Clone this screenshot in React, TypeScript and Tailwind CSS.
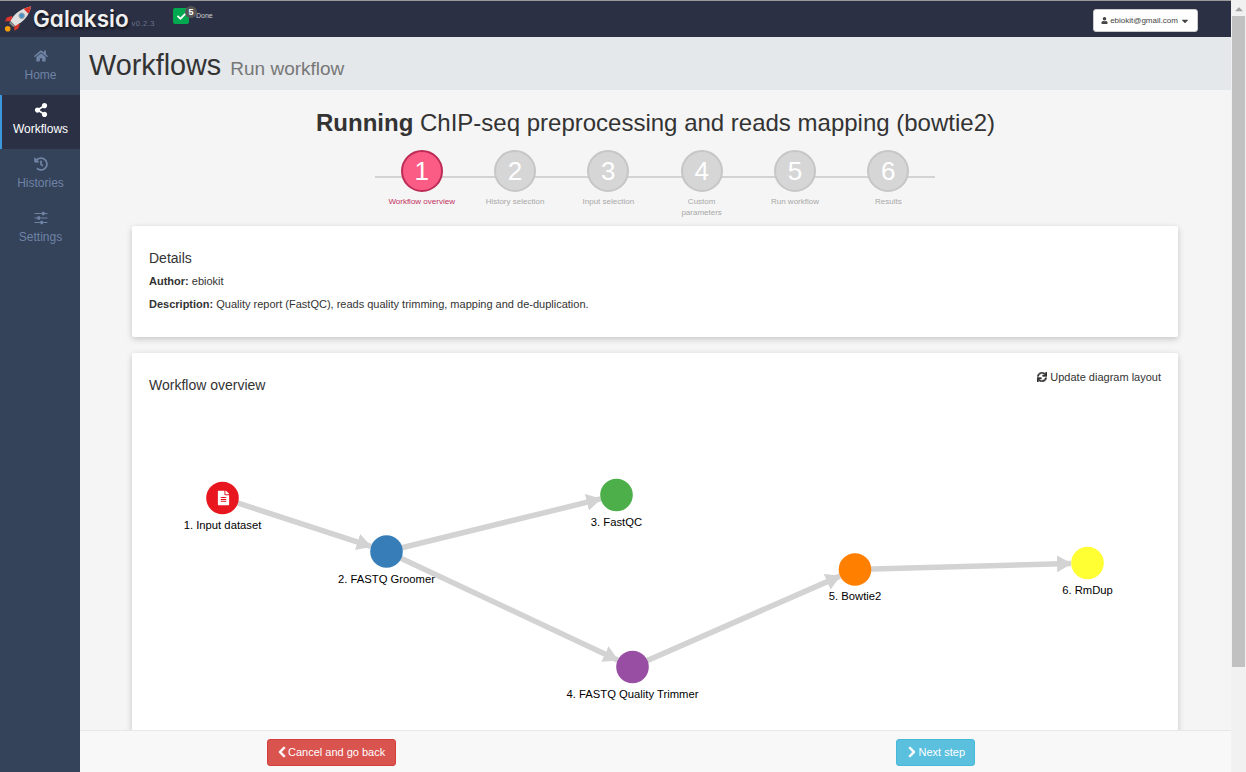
import { FaCheck, FaChevronLeft, FaChevronRight, FaCaretDown, FaCaretUp, FaFileAlt, FaHistory, FaHome, FaShareAlt, FaSync, FaUser } from 'react-icons/fa';

function SlidersIcon({ size = 14 }: { size?: number }) {
  return (
    <svg width={size} height={size} viewBox="0 0 14 14" fill="currentColor">
      <rect x="0.5" y="2" width="13" height="1" />
      <rect x="0.5" y="6.5" width="13" height="1" />
      <rect x="0.5" y="11" width="13" height="1" />
      <rect x="8" y="0.8" width="2.5" height="3.4" rx="0.5" />
      <rect x="3.5" y="5.3" width="2.5" height="3.4" rx="0.5" />
      <rect x="6.5" y="9.8" width="2.5" height="3.4" rx="0.5" />
    </svg>
  );
}

const navItems = [
  { label: 'Home', Icon: FaHome },
  { label: 'Workflows', Icon: FaShareAlt, active: true },
  { label: 'Histories', Icon: FaHistory },
  { label: 'Settings', Icon: SlidersIcon },
];

const steps = ['Workflow overview', 'History selection', 'Input selection', 'Custom parameters', 'Run workflow', 'Results'];

const nodes = [
  { x: 90.5, y: 105, color: '#e8171f', label: '1. Input dataset', ly: 136 },
  { x: 254.5, y: 158.5, color: '#377eb8', label: '2. FASTQ Groomer', ly: 190 },
  { x: 484.5, y: 102, color: '#4daf4a', label: '3. FastQC', ly: 133 },
  { x: 500.5, y: 274, color: '#984ea3', label: '4. FASTQ Quality Trimmer', ly: 305 },
  { x: 723, y: 176.5, color: '#ff7f00', label: '5. Bowtie2', ly: 207 },
  { x: 955.5, y: 170, color: '#ffff33', label: '6. RmDup', ly: 201 },
];

const edges = [
  [0, 1],
  [1, 2],
  [1, 3],
  [3, 4],
  [4, 5],
];

function RocketLogo() {
  return (
    <svg width="28" height="27" viewBox="0 0 30 28" className="-mt-[1px] shrink-0">
      <circle cx="4" cy="25" r="3" fill="#f59e0b" />
      <path d="M9 11 L3 13 L1 17 L8 17 Z" fill="#d9352b" />
      <path d="M17 20 L15 25 L11 27 L11 20 Z" fill="#d9352b" />
      <path d="M7 17 C10 10 17 4 29 1 C27 12 20 18 12 22 Z" fill="#e0e0e0" />
      <path d="M21 3.5 L29 1 C28.5 4 27.5 7 26 9 Z" fill="#d9352b" />
      <circle cx="19" cy="11" r="3" fill="#4a90c2" stroke="#a3a3a3" />
      <path d="M7 17 L12 22 L10 23 L5.5 19 Z" fill="#8a8a8a" />
    </svg>
  );
}

function Sidebar() {
  return (
    <nav className="w-[80px] shrink-0 bg-[#34425a] pt-[4px]">
      {navItems.map(({ label, Icon, active }) => (
        <div
          key={label}
          className={`h-[54px] flex flex-col items-center pt-[8px] text-[12px] leading-[14px] border-l-2 pr-[1px] ${active ? 'bg-[#2b3045] text-white border-[#3c97dd]' : 'text-[#6f84a5] border-transparent'}`}
        >
          <Icon size={14} />
          <span className="mt-[5px]">{label}</span>
        </div>
      ))}
    </nav>
  );
}

function Stepper() {
  return (
    <div className="relative ml-[295px] mt-[13px] flex w-[560px]">
      <div className="absolute left-0 right-0 top-[26px] h-[2px] bg-[#d3d3d3]" />
      {steps.map((step, i) => (
        <div key={step} className="relative flex-1 flex flex-col items-center">
          <div
            className={`w-[42px] h-[42px] rounded-full border-2 flex items-center justify-center text-[26px] text-white ${i === 0 ? 'bg-[#fb5c85] border-[#bd2c57]' : 'bg-[#d6d6d6] border-[#c6c6c6]'}`}
          >
            {i + 1}
          </div>
          <div className={`mt-[4px] w-[64px] text-center text-[8px] leading-[11px] ${i === 0 ? 'w-[80px] text-[#c2305e]' : i === 1 ? 'w-[80px] text-[#a8a8a8]' : 'text-[#a8a8a8]'}`}>
            {step}
          </div>
        </div>
      ))}
    </div>
  );
}

function Diagram() {
  return (
    <svg width="1046" height="378" className="block">
      <defs>
        <marker id="arrow" markerWidth="15" markerHeight="17" refX="14" refY="8.5" orient="auto" markerUnits="userSpaceOnUse">
          <path d="M0 0 L15 8.5 L0 17 Z" fill="#d3d3d3" />
        </marker>
      </defs>
      {edges.map(([a, b]) => {
        const from = nodes[a];
        const to = nodes[b];
        const dx = to.x - from.x;
        const dy = to.y - from.y;
        const len = Math.hypot(dx, dy);
        return (
          <line
            key={`${a}-${b}`}
            x1={from.x}
            y1={from.y}
            x2={to.x - (dx / len) * 16.5}
            y2={to.y - (dy / len) * 16.5}
            stroke="#d3d3d3"
            strokeWidth="5.5"
            markerEnd="url(#arrow)"
          />
        );
      })}
      {nodes.map((node) => (
        <g key={node.label}>
          <circle cx={node.x} cy={node.y} r="16.3" fill={node.color} />
          <text x={node.x} y={node.ly} textAnchor="middle" fontSize="11.25" fill="#000">
            {node.label}
          </text>
        </g>
      ))}
      <FaFileAlt x={84} y={97.5} size={15} color="#fff" />
    </svg>
  );
}

export default function App() {
  return (
    <div className="w-[1246px] h-[772px] flex overflow-hidden font-['Liberation_Sans',Arial,sans-serif] text-[#333]">
      <div className="w-[1231px] flex flex-col">
        <header className="h-[37px] shrink-0 bg-[#2b3045] border-t border-[#9a9a9a] flex items-center relative">
          <div className="ml-[4px] flex items-center w-[150px] shrink-0">
            <RocketLogo />
            <span className="ml-[1px] font-['Inter',sans-serif] text-[22.5px] leading-none font-semibold text-[#f0f0f0] [font-feature-settings:'cv11'] [text-shadow:1px_2px_3px_rgba(0,0,0,0.7)]">Galaksio</span>
            <span className="ml-[3px] mt-[10px] whitespace-nowrap text-[7.5px] tracking-[0.5px] text-[#6d7587]">v0.2.3</span>
          </div>
          <div className="relative ml-[19px] -mt-[6px] flex items-center">
            <div className="w-[16px] h-[16px] rounded-[2px] bg-[#00a94f] flex items-center justify-center text-white">
              <FaCheck size={9} />
            </div>
            <span className="absolute left-[12px] -top-[2px] w-[12px] h-[12px] rounded-full bg-[#555] text-white text-[9px] leading-[12px] font-bold text-center">5</span>
            <span className="ml-[7px] text-[7px] text-[#d0d0d0]">Done</span>
          </div>
          <button className="absolute left-[1093px] top-[8px] w-[105px] h-[23px] rounded-[3px] bg-white border border-[#ccc] flex items-center justify-center gap-[2px] text-[8px] text-[#444]">
            <FaUser size={7} />
            <span>ebiokit@gmail.com</span>
            <FaCaretDown size={10} />
          </button>
        </header>
        <div className="flex-1 flex min-h-0">
          <Sidebar />
          <main className="flex-1 flex flex-col min-w-0 bg-[#f5f5f5]">
            <div className="h-[53px] shrink-0 bg-[#e4e8eb] pl-[9px] pt-[10px] flex items-baseline">
              <h1 className="text-[28.8px] leading-[36px] text-[#333]">Workflows</h1>
              <span className="ml-[9px] text-[19px] text-[#777]">Run workflow</span>
            </div>
            <div className="flex-1 min-h-0 overflow-hidden">
              <h2 className="mt-[19px] text-center text-[24px] leading-[28px] text-[#333]">
                <b>Running</b> ChIP-seq preprocessing and reads mapping (bowtie2)
              </h2>
              <Stepper />
              <section className="ml-[52px] mr-[53px] mt-[8px] h-[111px] rounded-[2px] bg-white px-[17px] pt-[24px] shadow-[0_2px_6px_rgba(0,0,0,0.2)]">
                <h3 className="text-[14px] leading-[16px]">Details</h3>
                <p className="mt-[8px] text-[11px] leading-[14px]"><b>Author:</b> ebiokit</p>
                <p className="mt-[9px] text-[11px] leading-[14px]"><b>Description:</b> Quality report (FastQC), reads quality trimming, mapping and de-duplication.</p>
              </section>
              <section className="relative ml-[52px] mr-[53px] mt-[16px] h-[420px] rounded-[2px] bg-white shadow-[0_2px_6px_rgba(0,0,0,0.2)]">
                <h3 className="px-[17px] pt-[24px] text-[14px] leading-[16px]">Workflow overview</h3>
                <button className="absolute right-[17px] top-[17px] flex items-center gap-[3px] text-[11px] leading-[14px]">
                  <FaSync size={10} className="stroke-[24px]" />
                  Update diagram layout
                </button>
                <Diagram />
              </section>
            </div>
            <footer className="relative h-[42px] shrink-0 bg-[#f8f8f8] border-t border-[#e7e7e7] flex items-center justify-between pt-[1px] pl-[187px] pr-[256px]">
              <button className="h-[27px] pl-[10px] pr-[10px] rounded-[3px] bg-[#d9534f] border border-[#d43f3a] text-white text-[11px] flex items-center gap-[2px]">
                <FaChevronLeft size={12} className="-mx-[2px] stroke-[30px]" />
                Cancel and go back
              </button>
              <button className="h-[27px] pl-[11px] pr-[9px] rounded-[3px] bg-[#5bc0de] border border-[#46b8da] text-white text-[11px] flex items-center gap-[3px]">
                <FaChevronRight size={12} className="-mx-[2px] stroke-[30px]" />
                Next step
              </button>
            </footer>
          </main>
        </div>
      </div>
      <div className="w-[15px] shrink-0 bg-[#f1f1f1] flex flex-col items-center">
        <FaCaretUp size={12} className="text-[#a3a3a3] mt-[3px]" />
        <div className="mt-[1px] w-[13px] h-[651px] bg-[#c1c1c1]" />
      </div>
    </div>
  );
}
